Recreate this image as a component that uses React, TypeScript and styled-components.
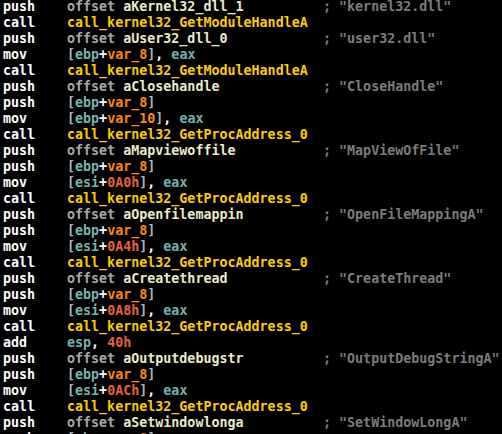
import React from "react";
import styled, { createGlobalStyle } from "styled-components";

const Global = createGlobalStyle`
  html, body { margin: 0; padding: 0; background: #000; }
  body { overflow: hidden; }
`;

const Listing = styled.div`
  background: #000;
  width: 502px;
  height: 434px;
  overflow: hidden;
  padding: 0 0 0 3px;
  box-sizing: border-box;
  font-family: "DejaVu Sans Mono", "Liberation Mono", monospace;
  font-weight: bold;
  font-size: 13.33px;
  white-space: pre;
`;

const Row = styled.div`
  display: flex;
  align-items: flex-start;
  height: 16px;
  line-height: 13px;
`;

const Mnemonic = styled.span`
  width: 64px;
  flex: none;
  color: #ffffff;
`;

const Operand = styled.span`
  width: 256px;
  flex: none;
`;

const Comment = styled.span`
  color: #7c7c7c;
`;

type Kind = "kw" | "name" | "call" | "punct" | "reg" | "var" | "num" | "plain";

const colors: Record<Kind, string> = {
  kw: "#a8a8a8",
  name: "#ecebc8",
  call: "#ffcc00",
  punct: "#a8b8b8",
  reg: "#78b0b0",
  var: "#ff8c00",
  num: "#e8603c",
  plain: "#ffffff",
};

const Tok = styled.span<{ $k: Kind }>`
  color: ${(p) => colors[p.$k]};
`;

type Part = [Kind, string];
type Line = { m: string; ops: Part[]; c?: string };

const mem = (base: string, disp: Part, tail = true): Part[] => {
  const out: Part[] = [
    ["punct", "["],
    ["reg", base],
    ["plain", "+"],
    disp,
    ["punct", "]"],
  ];
  if (tail) out.push(["plain", ", "], ["reg", "eax"]);
  return out;
};

const off = (n: string): Part[] => [
  ["kw", "offset "],
  ["name", n],
];

const gma: Part[] = [["call", "call_kernel32_GetModuleHandleA"]];
const gpa: Part[] = [["call", "call_kernel32_GetProcAddress_0"]];
const pv8 = mem("ebp", ["var", "var_8"], false);

const lines: Line[] = [
  { m: "push", ops: off("aKernel32_dll_1"), c: '; "kernel32.dll"' },
  { m: "call", ops: gma },
  { m: "push", ops: off("aUser32_dll_0"), c: '; "user32.dll"' },
  { m: "mov", ops: mem("ebp", ["var", "var_8"]) },
  { m: "call", ops: gma },
  { m: "push", ops: off("aClosehandle"), c: '; "CloseHandle"' },
  { m: "push", ops: pv8 },
  { m: "mov", ops: mem("ebp", ["var", "var_10"]) },
  { m: "call", ops: gpa },
  { m: "push", ops: off("aMapviewoffile"), c: '; "MapViewOfFile"' },
  { m: "push", ops: pv8 },
  { m: "mov", ops: mem("esi", ["num", "0A0h"]) },
  { m: "call", ops: gpa },
  { m: "push", ops: off("aOpenfilemappin"), c: '; "OpenFileMappingA"' },
  { m: "push", ops: pv8 },
  { m: "mov", ops: mem("esi", ["num", "0A4h"]) },
  { m: "call", ops: gpa },
  { m: "push", ops: off("aCreatethread"), c: '; "CreateThread"' },
  { m: "push", ops: pv8 },
  { m: "mov", ops: mem("esi", ["num", "0A8h"]) },
  { m: "call", ops: gpa },
  { m: "add", ops: [["reg", "esp"], ["plain", ", "], ["num", "40h"]] },
  { m: "push", ops: off("aOutputdebugstr"), c: '; "OutputDebugStringA"' },
  { m: "push", ops: pv8 },
  { m: "mov", ops: mem("esi", ["num", "0ACh"]) },
  { m: "call", ops: gpa },
  { m: "push", ops: off("aSetwindowlonga"), c: '; "SetWindowLongA"' },
  { m: "push", ops: pv8 },
];

export default function App() {
  return (
    <>
      <Global />
      <Listing>
        {lines.map((l, i) => (
          <Row key={i}>
            <Mnemonic>{l.m}</Mnemonic>
            <Operand>
              {l.ops.map(([k, t], j) => (
                <Tok key={j} $k={k}>
                  {t}
                </Tok>
              ))}
            </Operand>
            {l.c && <Comment>{l.c}</Comment>}
          </Row>
        ))}
      </Listing>
    </>
  );
}
